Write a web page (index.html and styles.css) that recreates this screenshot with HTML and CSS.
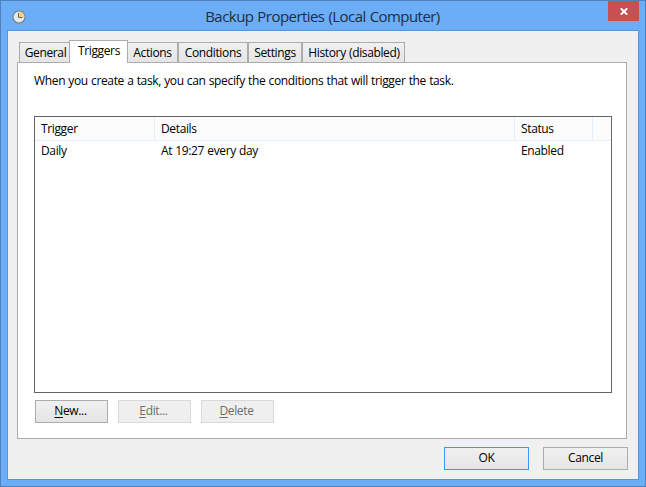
FILE: index.html
```html
<!DOCTYPE html>
<html lang="en">
<head>
<meta charset="utf-8">
<title>Backup Properties</title>
<link rel="stylesheet" href="styles.css">
</head>
<body>
<div class="window">
  <header class="titlebar">
    <svg class="clock" width="14" height="14" viewBox="0 0 14 14">
      <circle cx="7" cy="7" r="6" fill="#e4ebf0" stroke="#77838e" stroke-width="1.2"/>
      <path d="M7 7V1.5a5.5 5.5 0 0 1 5.5 5.5z" fill="#fbd27b"/>
      <path d="M6.5 3v4.5h4" fill="none" stroke="#59646e" stroke-width="1"/>
    </svg>
    <h1 class="title">Backup Properties (Local Computer)</h1>
    <button class="close" aria-label="Close"><svg width="8" height="7" viewBox="0 0 8 7"><path d="M.8 .3l6.4 6.4M7.2 .3L.8 6.7" stroke="#fff" stroke-width="1.9"/></svg></button>
  </header>
  <main class="client">
    <nav class="tabs">
      <div class="tab general"><span>General</span></div>
      <div class="tab triggers active"><span>Triggers</span></div>
      <div class="tab actions"><span>Actions</span></div>
      <div class="tab conditions"><span>Conditions</span></div>
      <div class="tab settings"><span>Settings</span></div>
      <div class="tab history"><span>History (disabled)</span></div>
    </nav>
    <section class="panel">
      <p class="intro">When you create a task, you can specify the conditions that will trigger the task.</p>
      <div class="list">
        <div class="row head"><div><span>Trigger</span></div><div><span>Details</span></div><div><span>Status</span></div></div>
        <div class="row"><div><span>Daily</span></div><div><span>At 19:27 every day</span></div><div><span>Enabled</span></div></div>
      </div>
      <div class="commands">
        <button class="button"><span><u>N</u>ew...</span></button>
        <button class="button" disabled><span><u>E</u>dit...</span></button>
        <button class="button" disabled><span><u>D</u>elete</span></button>
      </div>
    </section>
    <footer class="footer">
      <button class="button wide default"><span>OK</span></button>
      <button class="button wide"><span>Cancel</span></button>
    </footer>
  </main>
</div>
</body>
</html>
```
FILE: styles.css
```css
* { box-sizing: border-box; }
body {
  margin: 0;
  font: 12px/16px "Open Sans", "Noto Sans", sans-serif;
  letter-spacing: -0.36px;
  word-spacing: 0.4px;
  color: #000;
}
.window {
  width: 646px;
  height: 487px;
  padding: 0 7px 7px 6px;
  border: 1px solid #4d82bd;
  background: #6badf6;
}
.titlebar { display: flex; height: 29px; }
.clock { margin: 9px 0 0 5px; }
.title {
  flex: 1;
  margin: 4px 0 0 11px;
  font-size: 15px;
  line-height: 22px;
  font-weight: 400;
  letter-spacing: -0.55px;
  word-spacing: 0.6px;
  text-align: center;
  color: #1e2f42;
}
.close {
  display: flex;
  align-items: center;
  justify-content: center;
  width: 31px;
  height: 20px;
  padding: 1px 0 0 1px;
  margin-right: -1px;
  border: 0;
  background: #c75050;
}
.client {
  height: 450px;
  width: 632px;
  padding: 9px 9px 0;
  border: 1px solid #5695d9;
  background: #f0f0f0;
}
.tabs {
  display: flex;
  align-items: flex-end;
  height: 23px;
  padding-left: 2px;
  margin-bottom: -1px;
}
.tab {
  height: 21px;
  padding-top: 2px;
  border: 1px solid #acacac;
  background: linear-gradient(#f0f0f0, #e5e5e5);
  text-align: center;
  white-space: nowrap;
}
.tab.active {
  position: relative;
  height: 23px;
  border-bottom: 0;
  background: #fff;
}
.general { width: 50px; padding-left: 2px; border-right: 0; }
.triggers { width: 59px; padding-left: 1px; }
.actions { width: 50px; border-left: 0; }
.conditions { width: 70px; }
.settings { width: 54px; }
.history { width: 103px; padding-left: 1px; }
.panel {
  width: 610px;
  height: 377px;
  padding: 10px 14px 0 16px;
  border: 1px solid #acacac;
  background: #fff;
}
.intro { margin: 0; height: 43px; letter-spacing: -0.35px; white-space: nowrap; }
.list {
  width: 578px;
  height: 277px;
  border: 1px solid #646464;
}
.row {
  display: grid;
  grid-template-columns: 120px 360px 78px 1fr;
  height: 21px;
  line-height: 20px;
}
.row > div { padding-left: 6px; }
.head {
  height: 24px;
  line-height: 24px;
  border-bottom: 1px solid #e3edfb;
  background: #fcfcfc;
}
.head > div { border-right: 1px solid #e3edfb; }
.commands { display: flex; gap: 10px; padding: 7px 0 0 1px; }
.button {
  width: 73px;
  height: 23px;
  padding: 0 2px 1px 0;
  border: 1px solid #acacac;
  background: linear-gradient(#f0f0f0, #e5e5e5);
  font: inherit;
  letter-spacing: inherit;
  color: #000;
}
.button u { text-underline-offset: 2px; }
.button:disabled { border-color: #d9d9d9; background: #efefef; color: #6d6d6d; }
.wide { width: 85px; padding-right: 0; }
.default { border-color: #3399ff; }
.footer { display: flex; justify-content: flex-end; gap: 14px; margin: 8px 1px 0 0; }
```
